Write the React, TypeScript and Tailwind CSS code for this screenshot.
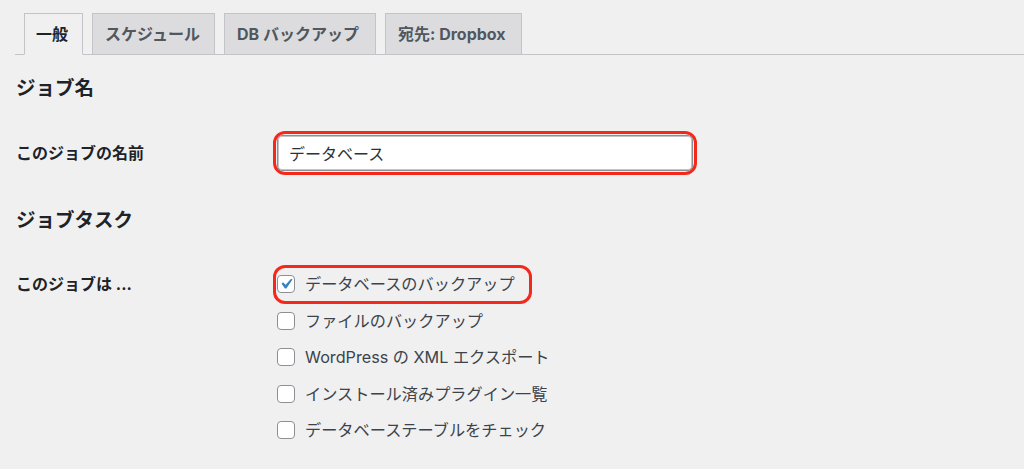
import { ReactNode } from 'react'

const tabs = [
  { label: '一般', w: 'w-[59px]' },
  { label: 'スケジュール', w: 'w-[123px]' },
  { label: 'DB バックアップ', w: 'w-[152px]' },
  { label: '宛先: Dropbox', w: 'w-[137px]' },
]

const tasks = [
  { label: 'データベースのバックアップ', checked: true },
  { label: 'ファイルのバックアップ', checked: false },
  { label: 'WordPress の XML エクスポート', checked: false },
  { label: 'インストール済みプラグイン一覧', checked: false },
  { label: 'データベーステーブルをチェック', checked: false },
]

function Checkbox({ checked }: { checked: boolean }) {
  return (
    <span className="relative w-[18px] h-[18px] shrink-0 rounded-[4px] border border-[#8c8f94] bg-white">
      {checked && (
        <svg viewBox="0 0 20 20" className="absolute left-1/2 top-1/2 w-[21px] h-[21px] -translate-x-1/2 -translate-y-1/2">
          <path d="M14.83 4.89l1.34.94-5.81 8.38H9.02L5.78 9.67l1.34-1.25 2.57 2.4z" fill="#3582c4" />
        </svg>
      )}
    </span>
  )
}

function Row({ label, children }: { label: string; children: ReactNode }) {
  return (
    <div className="grid grid-cols-[257px_1fr] items-start">
      <div className="h-[36.5px] flex items-center text-[16px] font-bold text-[#1d2327]">{label}</div>
      <div>{children}</div>
    </div>
  )
}

export default function App() {
  return (
    <div className="min-h-screen w-full bg-[#f0f0f1] font-['Inter','Noto_Sans_CJK_JP',sans-serif] text-[#1d2327] overflow-hidden">
      <div className="pt-[13px] pl-[15px]">
        <div className="flex pl-[9px] border-b border-[#c3c4c7]">
          {tabs.map((t, i) => (
            <div
              key={t.label}
              className={
                i === 0
                  ? `${t.w} -mb-px px-[11px] py-2 leading-6 text-[16px] font-bold border border-[#c3c4c7] border-b-[#f0f0f1] bg-[#f0f0f1] text-[#1d2327]`
                  : `${t.w} -mb-px ml-[9px] px-[12px] py-2 leading-6 text-[16px] font-bold whitespace-nowrap border border-[#c3c4c7] bg-[#dcdcde] text-[#50575e]`
              }
            >
              {t.label}
            </div>
          ))}
        </div>
      </div>

      <div className="px-[16px]">
        <h2 className="mt-[19px] text-[19.5px] leading-7 font-bold">ジョブ名</h2>

        <div className="mt-[29px] grid grid-cols-[257px_1fr] items-center">
          <div className="text-[16px] font-bold">このジョブの名前</div>
          <div className="w-[424px] rounded-[12px] border-[3px] border-[#f5281c] p-px">
            <input
              readOnly
              value="データベース"
              className="block w-full h-[36px] rounded-[5px] border border-[#8c8f94] bg-white px-[11px] text-[16px] text-[#2c3338] outline-none shadow-[inset_0_0_0_1px_#c3c4c7]"
            />
          </div>
        </div>

        <h2 className="mt-[31px] text-[19.5px] leading-7 font-bold">ジョブタスク</h2>

        <div className="mt-[32px]">
          <Row label="このジョブは ...">
            <div className="flex flex-col">
              {tasks.map((t, i) => (
                <div key={t.label} className="relative h-[36.5px] flex items-center gap-[10px] pl-[4px] text-[16.2px] text-[#3c434a]">
                  {i === 0 && (
                    <span className="absolute left-0 top-[-1px] w-[259px] h-[39px] rounded-[12px] border-[3px] border-[#f5281c]" />
                  )}
                  <Checkbox checked={t.checked} />
                  <span>{t.label}</span>
                </div>
              ))}
            </div>
          </Row>
        </div>
      </div>
    </div>
  )
}
